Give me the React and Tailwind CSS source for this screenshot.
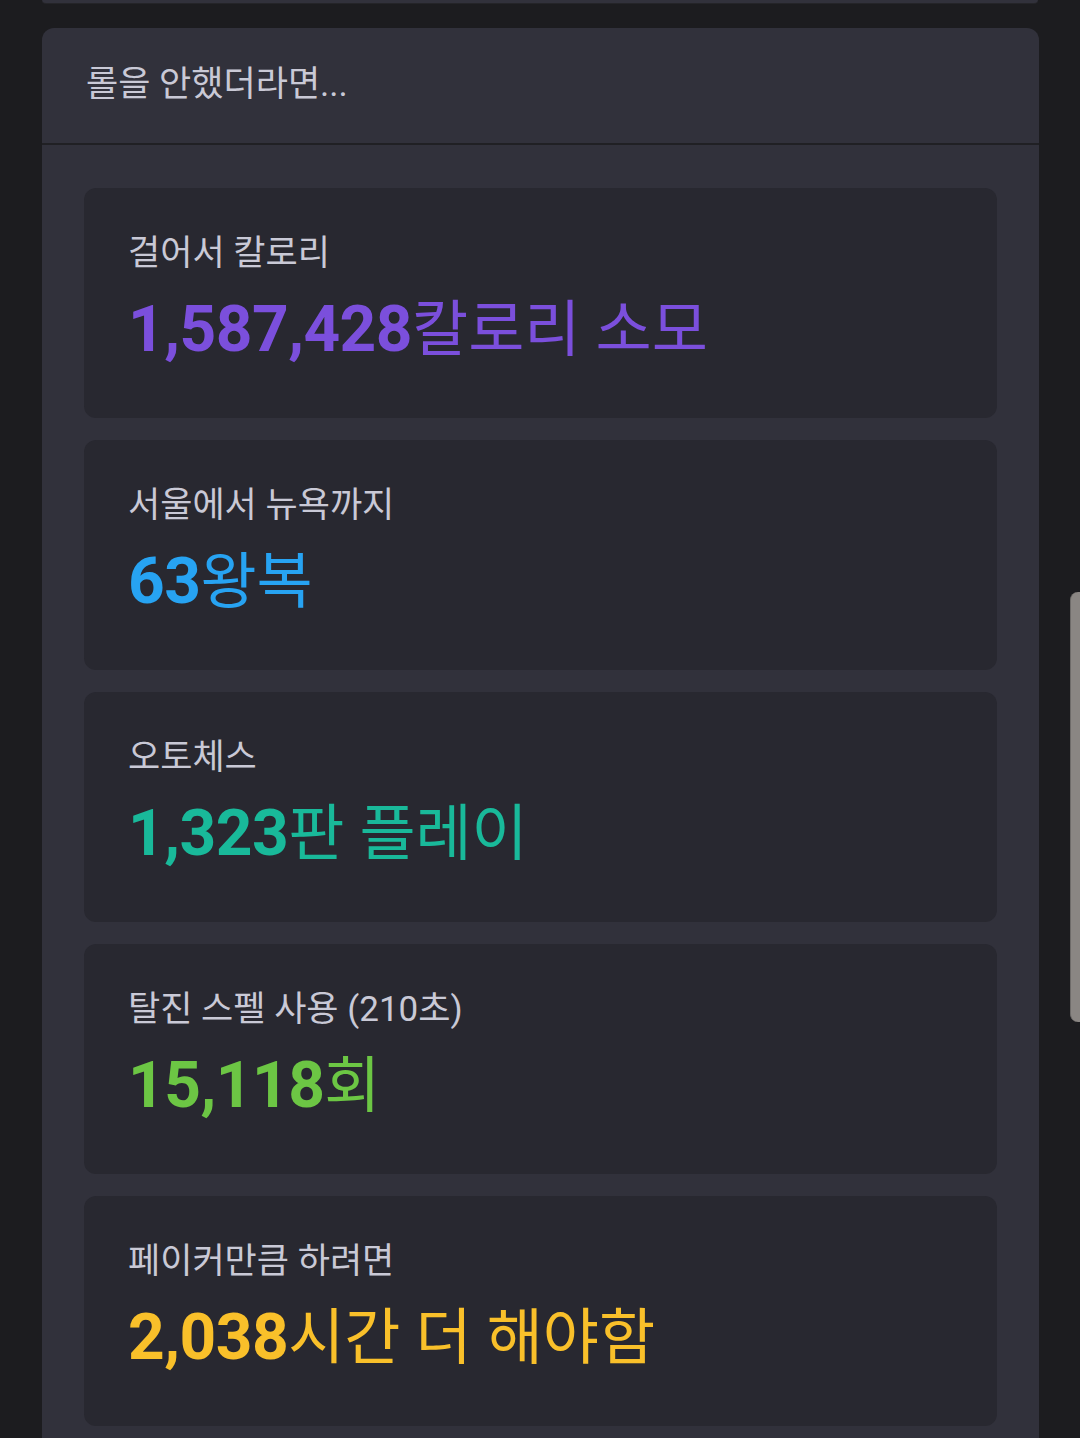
import React from "react";

const FONT = { fontFamily: 'Roboto, "Noto Sans CJK KR", "Noto Sans", sans-serif' };

const stats = [
  { label: "걸어서 칼로리", num: "1,587,428", unit: "칼로리 소모", color: "text-[#7b4fdc]" },
  { label: "서울에서 뉴욕까지", num: "63", unit: "왕복", color: "text-[#27a3f2]" },
  { label: "오토체스", num: "1,323", unit: "판 플레이", color: "text-[#19b99a]" },
  { label: "탈진 스펠 사용 (210초)", num: "15,118", unit: "회", color: "text-[#6cc644]" },
  { label: "페이커만큼 하려면", num: "2,038", unit: "시간 더 해야함", color: "text-[#f9c02a]" },
];

// ── One stat card ──────────────────────────────────────────────────────────
function StatCard({ stat }) {
  return (
    <div className="h-[230px] shrink-0 rounded-xl bg-[#282830] pl-[44px] pt-[46px]">
      <p className="text-[35px] leading-[40px] text-[#c9c9d6]">{stat.label}</p>
      <p className={`mt-[18px] leading-[76px] whitespace-nowrap ${stat.color}`}>
        <span className="text-[64px] font-bold tracking-[-0.5px]">{stat.num}</span>
        <span className="text-[61px] font-normal">{stat.unit}</span>
      </p>
    </div>
  );
}

export default function App() {
  return (
    <div style={FONT} className="relative w-[1080px] h-[1438px] overflow-hidden bg-[#1c1c1f]">
      {/* bottom edge of previous panel */}
      <div className="mx-[42px] w-[996px] h-[4px] rounded-b-xl bg-[#31313b] border-b border-[#242428]" />

      {/* Main panel */}
      <div className="mt-[24px] ml-[42px] w-[997px] rounded-xl bg-[#31313b]">
        <div className="h-[117px] flex items-center px-[44px] border-b-2 border-[#202024]">
          <h2 className="text-[35px] text-[#c9c9d6]">롤을 안했더라면...</h2>
        </div>
        <div className="flex flex-col gap-[22px] px-[42px] pt-[43px] pb-[40px]">
          {stats.map((s) => (
            <StatCard key={s.label} stat={s} />
          ))}
        </div>
      </div>

      {/* scrollbar thumb */}
      <div className="absolute right-0 top-[592px] w-[10px] h-[430px] rounded-l-lg bg-[#8a8683] border-l border-[#6e6b69]" />
    </div>
  );
}
